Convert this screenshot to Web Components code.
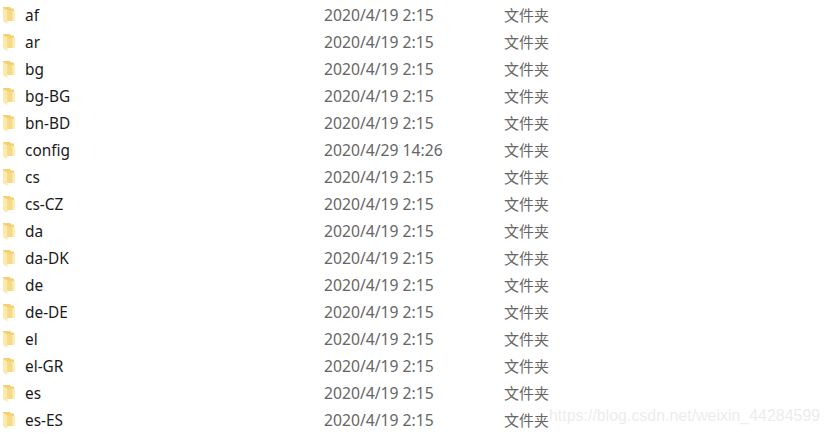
<!DOCTYPE html>
<html>
<head>
<meta charset="utf-8">
<style>
  html, body { margin: 0; background: #fff; }
  body { width: 829px; height: 434px; overflow: hidden; position: relative; }
</style>
</head>
<body>
<file-list></file-list>
<water-mark>https://blog.csdn.net/weixin_44284599</water-mark>
<script>
const rows = [
  ["af", "2020/4/19 2:15"], ["ar", "2020/4/19 2:15"], ["bg", "2020/4/19 2:15"],
  ["bg-BG", "2020/4/19 2:15"], ["bn-BD", "2020/4/19 2:15"], ["config", "2020/4/29 14:26"],
  ["cs", "2020/4/19 2:15"], ["cs-CZ", "2020/4/19 2:15"], ["da", "2020/4/19 2:15"],
  ["da-DK", "2020/4/19 2:15"], ["de", "2020/4/19 2:15"], ["de-DE", "2020/4/19 2:15"],
  ["el", "2020/4/19 2:15"], ["el-GR", "2020/4/19 2:15"], ["es", "2020/4/19 2:15"],
  ["es-ES", "2020/4/19 2:15"],
];

class FolderIcon extends HTMLElement {
  constructor() {
    super();
    this.attachShadow({ mode: "open" });
    this.shadowRoot.innerHTML = `
      <style>
        :host { display: block; width: 15px; height: 17px; align-self: start; margin-top: 6px; }
        svg { display: block; }
      </style>
      <svg width="15" height="17" viewBox="0 0 15 17">
        <path d="M3 0H10L11 1.5H14V14H3Z" fill="#f3d072"/>
        <path d="M3 1L7.5 3.5V17L4 15V14.5H3Z" fill="#fce9ad"/>
        <path d="M7.5 3.5H12.5V14H7.5Z" fill="#f7da87"/>
        <path d="M12.5 4H15V14H12.5Z" fill="#fdeeb9"/>
      </svg>`;
  }
}
customElements.define("folder-icon", FolderIcon);

class FileRow extends HTMLElement {
  constructor() {
    super();
    this.attachShadow({ mode: "open" });
    this.shadowRoot.innerHTML = `
      <style>
        :host {
          display: grid;
          grid-template-columns: 25px 299px 180px auto;
          align-items: center;
          height: 27px;
          font: 15.4px "Noto Sans", "Noto Sans CJK SC", sans-serif;
        }
        .name { color: #1a1a1a; padding-top: 2px; }
        .date, .type { color: #666; }
        .date { font-size: 15.7px; }
        .type { font-family: "Noto Sans CJK SC", sans-serif; font-size: 15px; }
      </style>
      <folder-icon></folder-icon>
      <span class="name"></span>
      <span class="date"></span>
      <span class="type">文件夹</span>`;
  }
  connectedCallback() {
    this.shadowRoot.querySelector(".name").textContent = this.getAttribute("name");
    this.shadowRoot.querySelector(".date").textContent = this.getAttribute("date");
  }
}
customElements.define("file-row", FileRow);

class FileList extends HTMLElement {
  constructor() {
    super();
    this.attachShadow({ mode: "open" });
    this.shadowRoot.innerHTML = `
      <style>
        :host { display: block; padding-top: 1px; }
      </style>
      <slot></slot>`;
    rows.forEach(([name, date]) => {
      const row = document.createElement("file-row");
      row.setAttribute("name", name);
      row.setAttribute("date", date);
      this.appendChild(row);
    });
  }
}
customElements.define("file-list", FileList);

class WaterMark extends HTMLElement {
  constructor() {
    super();
    this.attachShadow({ mode: "open" });
    this.shadowRoot.innerHTML = `
      <style>
        :host {
          position: absolute;
          left: 549px;
          top: 407px;
          font: 15.95px "Liberation Sans", sans-serif;
          color: rgba(190, 190, 190, 0.3);
          white-space: nowrap;
        }
      </style>
      <slot></slot>`;
  }
}
customElements.define("water-mark", WaterMark);
</script>
</body>
</html>
